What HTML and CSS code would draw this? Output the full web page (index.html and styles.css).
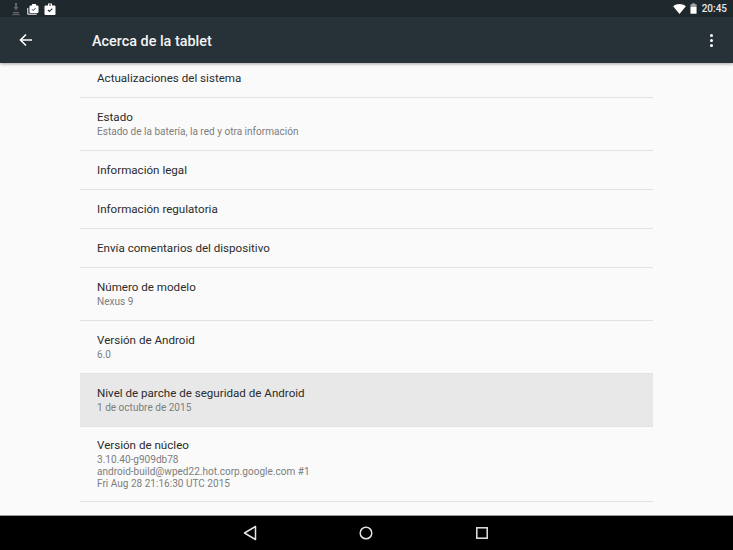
FILE: index.html
```html
<!DOCTYPE html>
<html lang="es">
<head>
  <meta charset="UTF-8" />
  <title>Acerca de la tablet</title>
  <link rel="stylesheet" href="styles.css">
</head>

<body>
  <div class="status-bar">
    <div class="status-icons">
      <svg width="14" height="14" viewBox="0 0 14 14"><path d="M6 1h2v4h1.500L7 8.500 4.500 5H6zM4 10h6v1.500H4zM3 12.200h8v1H3z" fill="#5f6568"/></svg>
      <svg width="14" height="14" viewBox="0 0 14 14"><path d="M4.500 3.500H6V2h4v1.500h1.500a1 1 0 0 1 1 1V10a1 1 0 0 1-1 1h-7a1 1 0 0 1-1-1V4.500a1 1 0 0 1 1-1z" fill="#fff"/><path d="M1.800 6v6.200h9" fill="none" stroke="#fff" stroke-width="1"/><path d="M6 7.300l1.200 1.200 2.300-2.300" fill="none" stroke="#263238" stroke-width="1"/></svg>
      <svg width="14" height="14" viewBox="0 0 14 14"><path d="M2.500 3.500H5V1.500h4v2h2.500a1 1 0 0 1 1 1V12a1 1 0 0 1-1 1h-9a1 1 0 0 1-1-1V4.500a1 1 0 0 1 1-1zM6 2.500v1h2v-1z" fill="#fff" fill-rule="evenodd"/><path d="M5 8l1.500 1.500L9.300 6.700" fill="none" stroke="#263238" stroke-width="1.100"/></svg>
    </div>
    <div class="status-right">
      <svg width="13" height="10" viewBox="0 0 14 11"><path d="M0 2.500C4-.8 10-.8 14 2.500L7 11z" fill="#fff"/></svg>
      <svg width="7" height="11" viewBox="0 0 8 12"><path d="M2.500 0h3v1H7.500v3H.500V1h2z" fill="#9ea3a5"/><path d="M.500 4h7v8h-7z" fill="#fff"/></svg>
      <span class="clock">20:45</span>
    </div>
  </div>

  <div class="toolbar">
    <svg class="back" width="14" height="14" viewBox="0 0 14 14"><path d="M13 7H2M7 1.500L1.500 7 7 12.500" fill="none" stroke="#fff" stroke-width="1.600"/></svg>
    <div class="toolbar-title">Acerca de la tablet</div>
    <div class="overflow"><span></span><span></span><span></span></div>
  </div>

  <div class="content">
    <div class="list">
      <div class="row row-first"><div class="title">Actualizaciones del sistema</div></div>
      <div class="row row-two">
        <div class="title">Estado</div>
        <div class="sub">Estado de la batería, la red y otra información</div>
      </div>
      <div class="row row-one"><div class="title">Información legal</div></div>
      <div class="row row-one"><div class="title">Información regulatoria</div></div>
      <div class="row row-one"><div class="title">Envía comentarios del dispositivo</div></div>
      <div class="row row-two">
        <div class="title">Número de modelo</div>
        <div class="sub">Nexus 9</div>
      </div>
      <div class="row row-two">
        <div class="title">Versión de Android</div>
        <div class="sub">6.0</div>
      </div>
      <div class="row row-two row-active">
        <div class="title">Nivel de parche de seguridad de Android</div>
        <div class="sub">1 de octubre de 2015</div>
      </div>
      <div class="row row-kernel">
        <div class="title">Versión de núcleo</div>
        <div class="sub">3.10.40-g909db78<br>android-build@wped22.hot.corp.google.com #1<br>Fri Aug 28 21:16:30 UTC 2015</div>
      </div>
    </div>
  </div>

  <div class="nav-bar">
    <svg width="14" height="16" viewBox="0 0 14 16"><path d="M12.500 1.500v13L1.500 8z" fill="none" stroke="#e4e4e4" stroke-width="1.500" stroke-linejoin="round"/></svg>
    <svg width="14" height="14" viewBox="0 0 14 14"><circle cx="7" cy="7" r="5.800" fill="none" stroke="#e4e4e4" stroke-width="1.500"/></svg>
    <svg width="14" height="14" viewBox="0 0 14 14"><rect x="1.800" y="1.800" width="10.400" height="10.400" fill="none" stroke="#e4e4e4" stroke-width="1.500"/></svg>
  </div>
</body>
</html>
```

FILE: styles.css
```css
body {
  margin: 0;
  width: 733px;
  height: 550px;
  display: flex;
  flex-direction: column;
  overflow: hidden;
  font-family: Roboto, "Liberation Sans", sans-serif;
  background-color: #fafafa;
}

.status-bar {
  height: 17px;
  background-color: #1f282d;
  display: flex;
  justify-content: space-between;
  align-items: center;
  padding: 0 6px 0 9px;
  flex-shrink: 0;
}

.status-icons {
  display: flex;
  gap: 3px;
}

.status-right {
  display: flex;
  align-items: center;
  gap: 4px;
}

.clock {
  color: #e6e8e9;
  font-size: 10px;
  font-weight: 500;
  margin-left: 1px;
}

.toolbar {
  height: 46px;
  background-color: #263238;
  display: flex;
  align-items: center;
  padding: 0 20px 0 19px;
  flex-shrink: 0;
  box-shadow: 0 1px 3px rgba(0, 0, 0, 0.35);
  position: relative;
  z-index: 1;
}

.toolbar-title {
  color: #f2f4f4;
  font-size: 14.400px;
  font-weight: 500;
  margin: 2px 0 0 59px;
  flex: 1;
}

.overflow {
  display: flex;
  flex-direction: column;
  gap: 2px;
}

.overflow span {
  width: 3px;
  height: 3px;
  border-radius: 50%;
  background-color: #fff;
}

.content {
  flex: 1;
  padding: 0 80px;
  overflow: hidden;
}

.row {
  border-bottom: 1px solid #e2e2e2;
  display: flex;
  flex-direction: column;
  justify-content: center;
  padding: 0 17px;
}

.row-first {
  height: 30px;
  padding-bottom: 4px;
}

.row-one {
  height: 38px;
}

.row-one .title {
  margin-top: 1px;
}

.row-two {
  height: 51px;
  padding-bottom: 1px;
}

.row-active {
  background-color: #e8e8e8;
}

.row-kernel {
  height: 73px;
  padding-bottom: 1px;
}

.title {
  font-size: 11.600px;
  line-height: 15px;
  color: #2b2b2b;
}

.sub {
  font-size: 10.050px;
  line-height: 12px;
  color: #7d7d7d;
  margin-top: 1px;
}

.nav-bar {
  height: 35px;
  background-color: #000;
  border-top: 1px solid #9a9a9a;
  box-sizing: border-box;
  display: flex;
  justify-content: center;
  align-items: center;
  gap: 102px;
  padding-right: 2px;
  flex-shrink: 0;
}
```
